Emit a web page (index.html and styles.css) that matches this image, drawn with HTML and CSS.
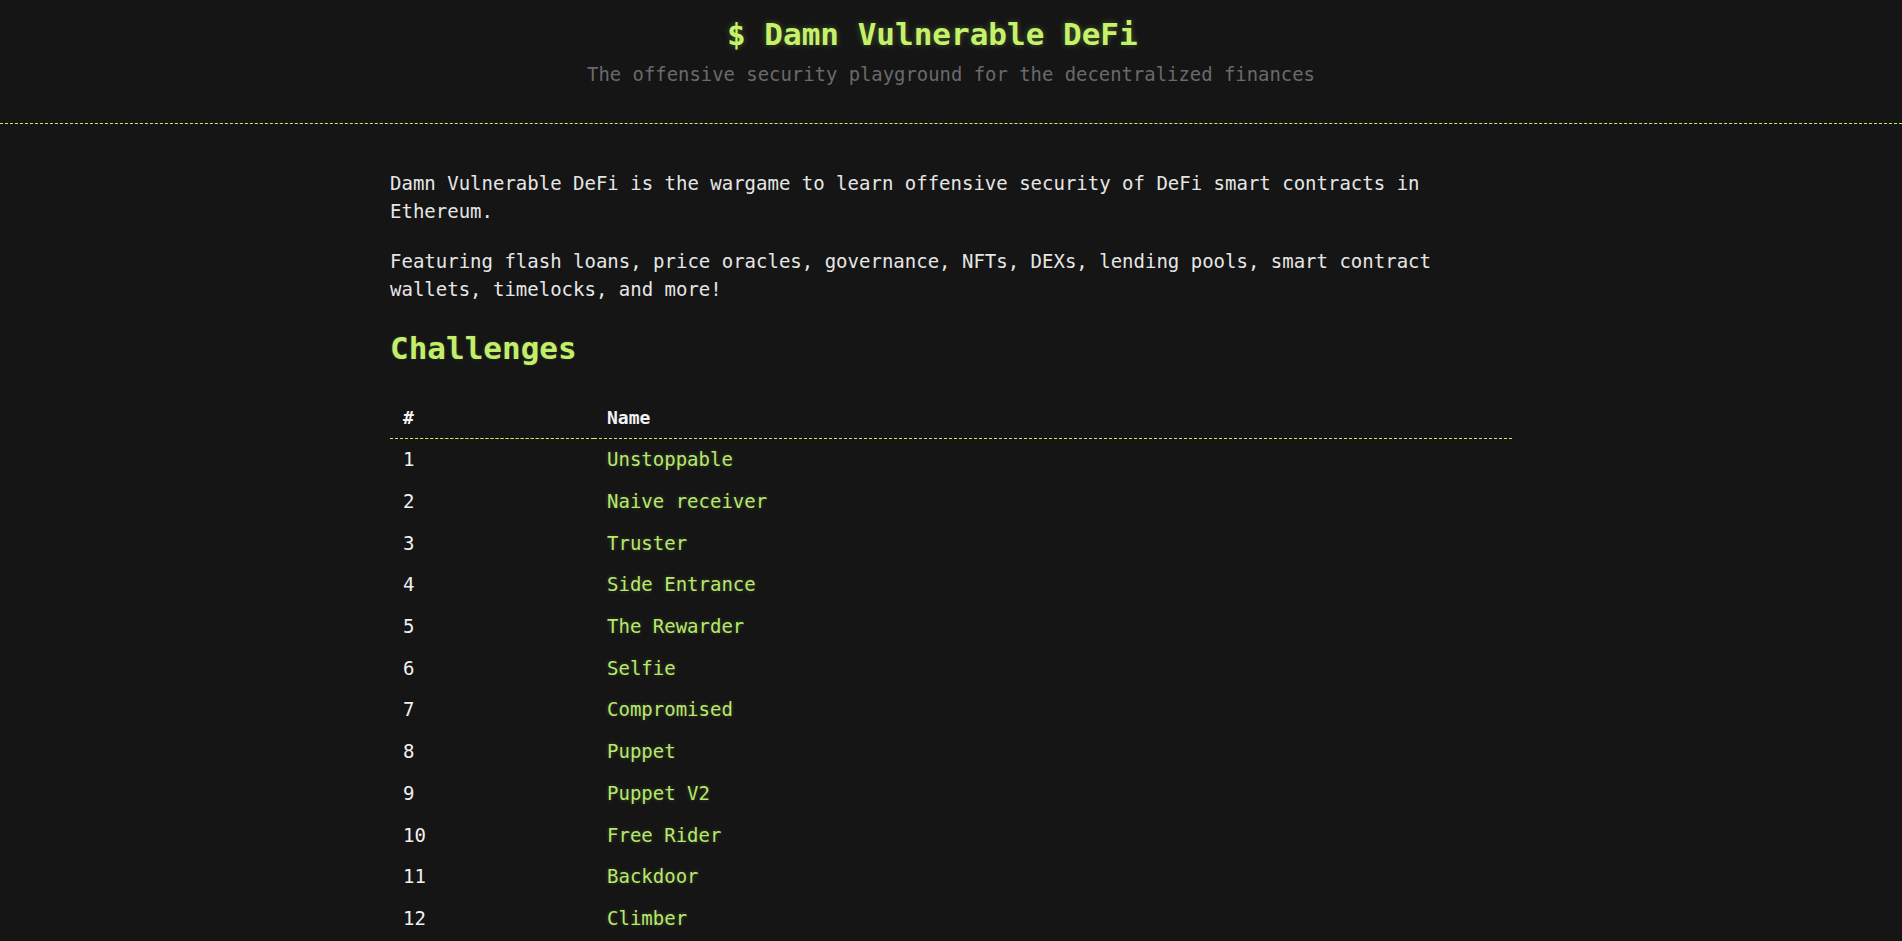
FILE: index.html
```html
<!DOCTYPE html>
<html lang="en">
<head>
<meta charset="utf-8">
<title>Damn Vulnerable DeFi</title>
<link rel="stylesheet" href="styles.css">
</head>
<body>
<header class="site-header">
  <h1 class="site-title">$ Damn Vulnerable DeFi <span class="cursor">_</span></h1>
  <p class="site-tagline">The offensive security playground for the decentralized finances</p>
</header>
<main class="content">
  <p class="intro">Damn Vulnerable DeFi is the wargame to learn offensive security of DeFi smart contracts in Ethereum.</p>
  <p class="intro">Featuring flash loans, price oracles, governance, NFTs, DEXs, lending pools, smart contract wallets, timelocks, and more!</p>
  <h2 class="section-title">Challenges</h2>
  <table class="challenges">
    <thead>
      <tr><th class="col-num">#</th><th>Name</th></tr>
    </thead>
    <tbody>
      <tr><td>1</td><td><a href="#">Unstoppable</a></td></tr>
      <tr><td>2</td><td><a href="#">Naive receiver</a></td></tr>
      <tr><td>3</td><td><a href="#">Truster</a></td></tr>
      <tr><td>4</td><td><a href="#">Side Entrance</a></td></tr>
      <tr><td>5</td><td><a href="#">The Rewarder</a></td></tr>
      <tr><td>6</td><td><a href="#">Selfie</a></td></tr>
      <tr><td>7</td><td><a href="#">Compromised</a></td></tr>
      <tr><td>8</td><td><a href="#">Puppet</a></td></tr>
      <tr><td>9</td><td><a href="#">Puppet V2</a></td></tr>
      <tr><td>10</td><td><a href="#">Free Rider</a></td></tr>
      <tr><td>11</td><td><a href="#">Backdoor</a></td></tr>
      <tr><td>12</td><td><a href="#">Climber</a></td></tr>
    </tbody>
  </table>
</main>
</body>
</html>
```

FILE: styles.css
```css
html, body {
  margin: 0;
  padding: 0;
  background: #151515;
}

body {
  color: #e6e6e6;
  font-family: "DejaVu Sans Mono", "Liberation Mono", monospace;
  font-size: 19px;
  line-height: 1.5;
}

.site-header {
  padding: 15.5px 0 35px;
  text-align: center;
  border-bottom: 1px dashed #c2ef66;
}

.site-title {
  margin: 0;
  font-size: 31px;
  line-height: 37px;
  font-weight: bold;
  color: #c5f26b;
  text-shadow: 0 0 6px rgba(197, 242, 107, 0.3);
}

.cursor {
  opacity: 0;
}

.site-tagline {
  margin: 7px 0 0;
  color: #6a6a6a;
  font-size: 18.9px;
}

.content {
  max-width: 1122px;
  margin: 0 auto;
  padding-top: 45px;
}

.intro {
  margin: 0 0 21px;
}

.intro + .intro {
  margin-bottom: 0;
}

.section-title {
  margin: 26px 0 31px;
  font-size: 31px;
  line-height: 1.2;
  font-weight: bold;
  color: #c2ee6b;
  text-shadow: 0 0 3px rgba(194, 238, 107, 0.2);
}

.challenges {
  width: 100%;
  border-collapse: collapse;
}

.challenges th,
.challenges td {
  text-align: left;
  padding: 5.6px 13px;
  line-height: 28.5px;
}

.challenges th {
  font-size: 18px;
  font-weight: bold;
  color: #f2f2f2;
  border-bottom: 1px dashed #c2ef66;
}

.challenges .col-num {
  width: 178px;
}

.challenges td {
  padding: 6.6px 13px;
  color: #f0f0f0;
}

.challenges a {
  color: #b8e86c;
  text-decoration: none;
  text-shadow: 0 0 4px rgba(184, 232, 108, 0.25);
}
```
